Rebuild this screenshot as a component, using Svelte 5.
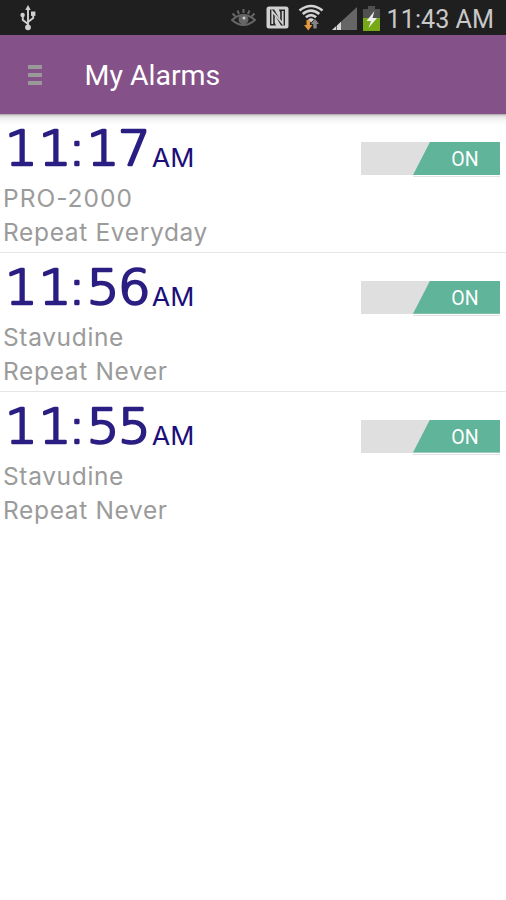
<script>
  let alarms = $state([
    { time: '11:17', period: 'AM', label: 'PRO-2000', repeat: 'Repeat Everyday', on: true },
    { time: '11:56', period: 'AM', label: 'Stavudine', repeat: 'Repeat Never', on: true },
    { time: '11:55', period: 'AM', label: 'Stavudine', repeat: 'Repeat Never', on: true },
  ]);

  function toggle(alarm) { alarm.on = !alarm.on; }
</script>

<div class="screen">
  <div class="status-bar">
    <svg class="usb" width="20" height="28" viewBox="0 0 20 28" fill="none" stroke="#d0d0d0" stroke-width="1.9">
      <path d="M10 22V5M10 20L4.8 16V11M10 18L15.2 14V10" />
      <path d="M10 1L12.7 6H7.3Z" fill="#d0d0d0" stroke="none" />
      <circle cx="10" cy="23.3" r="2.9" fill="#d0d0d0" stroke="none" />
      <circle cx="4.6" cy="11" r="2.2" fill="#d0d0d0" stroke="none" />
      <path d="M13 7.5h4.4v4.4h-4.4z" fill="#d0d0d0" stroke="none" />
    </svg>

    <div class="status-icons">
      <!-- smart stay -->
      <svg width="25" height="24" viewBox="0 0 25 24" fill="none" stroke="#666" stroke-width="2">
        <path d="M1 14Q12.5 4 24 14Q12.5 24 1 14Z" />
        <path d="M12.5 3V7M6.5 4.5L8 8M18.5 4.5L17 8M1.5 7.5L4.5 10.5M23.5 7.5L20.5 10.5" />
        <circle cx="12.5" cy="13.5" r="5" fill="#666" stroke="none" />
        <circle cx="13" cy="12" r="1.5" fill="#ccc" stroke="none" />
      </svg>
      <!-- nfc -->
      <svg class="nfc" width="23" height="23" viewBox="0 0 23 23">
        <rect x=".5" y=".5" width="22" height="22" rx="2.5" fill="#d0d0d0" />
        <path d="M4 19.5V3.5H8.2L14.2 14V6.5L12.8 3.5H19V19.5H15L8.7 9V16.5L10 19.5Z" fill="#262626" />
        <path d="M6.3 18V5.5L16.7 17.5V5" fill="none" stroke="#d0d0d0" stroke-width="1.8" />
      </svg>
      <!-- wifi -->
      <svg class="wifi" width="26" height="27" viewBox="0 0 26 27" fill="none" stroke="#d4d4d4" stroke-width="2.6">
        <path d="M1.5 6.5Q13 -2.5 24.5 6.5M4.7 10Q13 3.2 21.3 10M7.9 13.3Q13 9 18.1 13.3" />
        <path d="M10 15.5Q13 13 16 15.5L13 18.5Z" fill="#d4d4d4" stroke="none" />
        <path d="M8.5 16h3.5v5h2.5L10.25 26.5L6 21H8.5Z" fill="#e29a3c" stroke="none" />
        <path d="M13 20L17 15L21 20H18.7V24.5H15.3V20Z" fill="#858585" stroke="none" />
      </svg>
      <!-- signal -->
      <svg class="signal" width="25" height="23" viewBox="0 0 25 23">
        <path d="M0 23L25 0V23Z" fill="#666" />
        <path d="M0 23L4 19.3V23ZM5 23V18.4L9 14.7V23Z" fill="#d6d6d6" />
      </svg>
      <!-- battery -->
      <svg class="battery" width="17" height="25" viewBox="0 0 17 25">
        <path d="M5 0H12V3H17V25H0V3H5Z" fill="#505050" />
        <path d="M0 12H17V25H0Z" fill="#76a818" />
        <path d="M11.5 5L3.5 15H8L5.5 22L14 12H9.5Z" fill="#eee" />
      </svg>
    </div>
    <span class="clock">11:43 AM</span>
  </div>

  <header class="app-bar">
    <button class="menu-btn" aria-label="Menu"><i></i><i></i><i></i></button>
    <h1>My Alarms</h1>
  </header>

  <main class="list">
    {#each alarms as alarm}
      <section class="alarm">
        <div class="info">
          <!-- svg text so the strokes get rounded ends -->
          <svg class="when" width="200" height="67" viewBox="0 0 200 67">
            <text class="time" transform="scale(1.08 1)" x="1.8 33 60.5 77.5 106.5" y="51">{alarm.time}</text>
            <text class="period" transform="scale(1.07 1)" x="139" y="53">{alarm.period}</text>
          </svg>
          <div class="detail" class:code={alarm.label.includes('-')}>{alarm.label}</div>
          <div class="detail">{alarm.repeat}</div>
        </div>
        <button class="switch" class:off={!alarm.on} onclick={() => toggle(alarm)}>
          <span class="thumb"><span>{alarm.on ? 'ON' : 'OFF'}</span></span>
        </button>
      </section>
    {/each}
  </main>
</div>

<style>
  :global(body) { background: #fff; }

  .screen {
    width: 506px;
    height: 900px;
    overflow: hidden;
    display: flex;
    flex-direction: column;
    background: #fff;
    font-family: Roboto, sans-serif;
  }
  button { border: 0; padding: 0; font: inherit; cursor: pointer; }
  svg { display: block; flex-shrink: 0; }

  .status-bar {
    height: 35px;
    flex-shrink: 0;
    display: flex;
    align-items: center;
    padding: 0 12px 0 18px;
    background: #1f1f1f;
  }
  .status-icons { margin-left: auto; display: flex; align-items: center; }
  .nfc { margin-left: 10px; }
  .wifi { margin-left: 9px; }
  .signal { margin-left: 8px; margin-top: 2px; }
  .battery { margin-left: 6px; margin-top: 1px; }
  .clock {
    margin-left: 7px;
    color: #c8c8c8;
    font-size: 25.2px;
    line-height: 35px;
    padding-top: 3px;
    white-space: nowrap;
  }

  .app-bar {
    height: 79px;
    flex-shrink: 0;
    display: flex;
    align-items: center;
    padding-left: 28px;
    background: #845188;
  }
  .menu-btn { width: 14px; display: grid; gap: 4px; background: none; }
  .menu-btn i { height: 4px; background: #999; }
  h1 {
    margin: 2px 0 0 42.5px;
    color: #fff;
    font-size: 28.5px;
    font-weight: 400;
    line-height: 36px;
  }

  .list {
    flex: 1;
    background: linear-gradient(#999 0, #ccc 1px, #e9e9e9 3px, #f8f8f8 7px, #fff 12px);
  }

  .alarm {
    height: 137.75px;
    display: flex;
    justify-content: space-between;
    border-bottom: 1px solid #e6e6e6;
  }
  .alarm:last-child { border-bottom: 0; }
  .info { padding-left: 3px; }
  .time {
    font-family: "DejaVu Sans", sans-serif;
    font-size: 47.5px;
    font-weight: 200;
    fill: #2a1e82;
    stroke: #2a1e82;
    stroke-width: 2.6px;
    stroke-linejoin: round;
  }
  .period {
    font-family: Inter, sans-serif;
    font-size: 25px;
    fill: #1c0e7a;
  }
  .detail {
    font-family: Inter, sans-serif;
    font-size: 24.5px;
    line-height: 34px;
    letter-spacing: 0.65px;
    color: #9b9b9b;
    white-space: nowrap;
  }
  .code { letter-spacing: 1px; }

  .switch {
    width: 139px;
    height: 33px;
    margin: 28px 6px 0 0;
    display: flex;
    justify-content: flex-end;
    background: #dfdfdf;
  }
  .thumb {
    width: 87px;
    height: 35px;
    flex-shrink: 0;
    background: linear-gradient(#fff 1px, #e2e2e2 1px) bottom / 100% 2px no-repeat;
  }
  .thumb span {
    display: block;
    height: 33px;
    padding-left: 17px;
    clip-path: polygon(17px 0, 100% 0, 100% 100%, 0 100%);
    background: #60b499;
    color: #fff;
    font-size: 19.5px;
    line-height: 35px;
    text-align: center;
  }
  .off { justify-content: flex-start; }
  .off .thumb span { background: #aaa; }
</style>
